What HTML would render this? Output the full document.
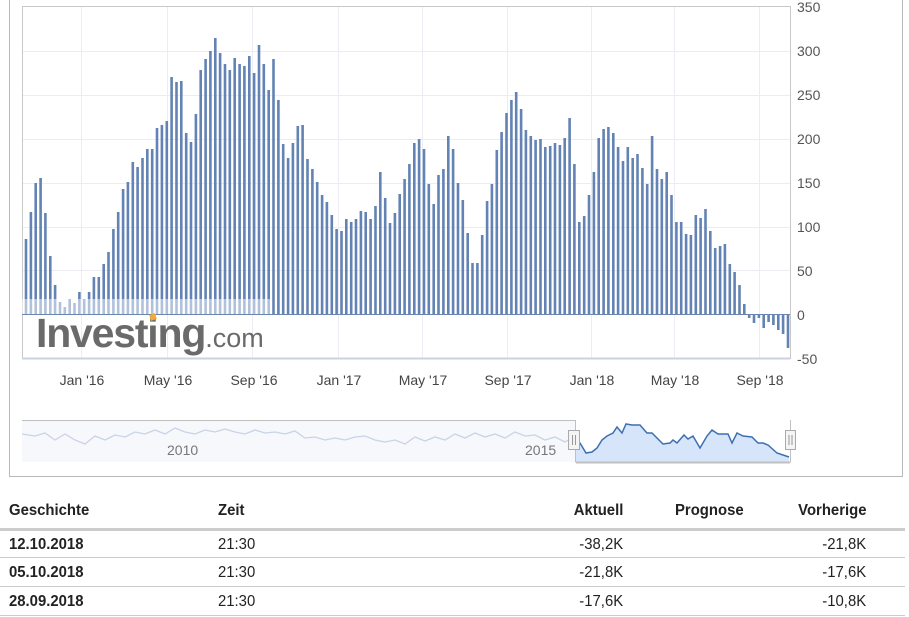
<!DOCTYPE html>
<html><head><meta charset="utf-8"><style>
body{margin:0;width:909px;height:617px;background:#fff;overflow:hidden;font-family:"Liberation Sans",Arial,sans-serif;position:relative}
svg{position:absolute;left:0;top:0}
.tbl{position:absolute;left:0;top:0;width:909px;font-size:16px;color:#222}
.t{position:absolute;white-space:nowrap;transform:scaleX(0.93);transform-origin:left}
.r{transform-origin:right}
.b{font-weight:bold}
.ln{position:absolute;left:0;width:905px;height:2px;background:#ccc}
</style></head><body>
<svg width="909" height="617" viewBox="0 0 909 617">
<path d="M9.5 0V476.5H902.5V0" fill="none" stroke="#b8b8b8"/>
<g stroke="#ececf2" stroke-width="1">
<path d="M22 51.5H790M22 95.5H790M22 139.5H790M22 183.5H790M22 227.5H790M22 270.5H790"/>
<path d="M81.5 7V358M167.5 7V358M252.5 7V358M338.5 7V358M422.5 7V358M507.5 7V358M591.5 7V358M674.5 7V358M759.5 7V358"/>
</g>
<rect x="22.5" y="6.5" width="768" height="352" fill="none" stroke="#c8c8c8"/>
<path d="M22 358.5H790" stroke="#c9d3e2" stroke-width="2"/>
<path id="bars" d="" stroke="#6383b4" stroke-width="2.6" fill="none"/>
<path d="M22 314.5H790" stroke="#6a86b0" stroke-width="1"/>
<rect x="22" y="299" width="250" height="15" fill="#fff" opacity="0.5"/>
<text x="36" y="347" font-size="41" font-weight="bold" fill="#6a6a6a" letter-spacing="-1.2" font-family="Liberation Sans,sans-serif">Investing<tspan font-weight="normal" font-size="27" letter-spacing="0">.com</tspan></text>
<rect x="150" y="314" width="6" height="6" fill="#f2a93b" transform="rotate(-20 153 317)"/>
<g font-size="14" fill="#555" font-family="Liberation Sans,sans-serif">
<text x="797" y="12">350</text><text x="797" y="56">300</text><text x="797" y="100">250</text><text x="797" y="144">200</text><text x="797" y="188">150</text><text x="797" y="232">100</text><text x="797" y="276">50</text><text x="797" y="320">0</text><text x="797" y="364">-50</text>
</g>
<g font-size="14" fill="#444" text-anchor="middle" font-family="Liberation Sans,sans-serif">
<text x="82" y="385">Jan '16</text><text x="168" y="385">May '16</text><text x="254" y="385">Sep '16</text><text x="339" y="385">Jan '17</text><text x="423" y="385">May '17</text><text x="508" y="385">Sep '17</text><text x="592" y="385">Jan '18</text><text x="675" y="385">May '18</text><text x="760" y="385">Sep '18</text>
</g>
<rect x="22" y="421" width="553" height="41" fill="#f6f8fc"/>
<path d="M22 420.5H575" stroke="#c0c0c0"/>
<path d="M22 434 L35 436 L45 433 L55 440 L65 434 L75 440 L85 444 L95 436 L105 440 L115 435 L125 437 L135 432 L145 434 L155 430 L165 434 L175 428 L185 432 L195 434 L205 430 L215 432 L225 429 L235 432 L245 434 L255 430 L265 433 L275 432 L285 434 L295 431 L305 438 L315 437 L325 440 L335 438 L345 440 L355 437 L365 436 L375 440 L385 442 L395 440 L405 444 L415 437 L425 441 L435 437 L445 440 L455 434 L465 438 L475 433 L485 437 L495 434 L505 438 L515 432 L525 436 L535 435 L545 440 L555 437 L565 442 L575 436" fill="none" stroke="#c8d4e6" stroke-width="1.3"/>
<g font-size="14" fill="#777" font-family="Liberation Sans,sans-serif"><text x="167" y="455">2010</text><text x="525" y="455">2015</text></g>
<path d="M576 442 L580 443 L586 453 L592 452 L597 448 L602 440 L607 436 L613 433 L617 427 L622 433 L626 424 L632 425 L640 425 L647 433 L652 433 L657 438 L663 444 L670 443 L673 440 L677 443 L684 435 L688 439 L693 436 L700 448 L707 436 L712 430 L718 434 L728 434 L732 443 L737 433 L743 436 L752 437 L758 443 L763 443 L768 445 L777 453 L783 455 L789 457 V462 H576Z" fill="#d6e5fa"/>
<path d="M576 442 L580 443 L586 453 L592 452 L597 448 L602 440 L607 436 L613 433 L617 427 L622 433 L626 424 L632 425 L640 425 L647 433 L652 433 L657 438 L663 444 L670 443 L673 440 L677 443 L684 435 L688 439 L693 436 L700 448 L707 436 L712 430 L718 434 L728 434 L732 443 L737 433 L743 436 L752 437 L758 443 L763 443 L768 445 L777 453 L783 455 L789 457" fill="none" stroke="#3d6fb0" stroke-width="1.5"/>
<path d="M575.5 420V462H790.5V420" fill="none" stroke="#c0c0c0"/>
<path d="M576 462.5H790" stroke="#c0c0c0" stroke-width="2"/>
<rect x="568.5" y="430.5" width="11" height="19" fill="#f4f4f4" stroke="#aaa"/>
<path d="M572.5 435V445M575.5 435V445" stroke="#999"/>
<rect x="785.5" y="430.5" width="10" height="19" fill="#f4f4f4" stroke="#aaa"/>
<path d="M789 435V445M792 435V445" stroke="#999"/>
</svg>
<div class="tbl">
<div class="t b" style="left:9px;top:502px">Geschichte</div>
<div class="t b" style="left:218px;top:502px">Zeit</div>
<div class="t b r" style="right:286px;top:502px">Aktuell</div>
<div class="t b" style="left:675px;top:502px">Prognose</div>
<div class="t b r" style="right:43px;top:502px">Vorherige</div>
<div class="ln" style="top:528px;height:3px"></div>
<div class="t b" style="left:9px;top:536px">12.10.2018</div><div class="t" style="left:218px;top:536px">21:30</div><div class="t r" style="right:286px;top:536px">-38,2K</div><div class="t r" style="right:43px;top:536px">-21,8K</div>
<div class="ln" style="top:557px;height:1px"></div>
<div class="t b" style="left:9px;top:564px">05.10.2018</div><div class="t" style="left:218px;top:564px">21:30</div><div class="t r" style="right:286px;top:564px">-21,8K</div><div class="t r" style="right:43px;top:564px">-17,6K</div>
<div class="ln" style="top:586px;height:1px"></div>
<div class="t b" style="left:9px;top:593px">28.09.2018</div><div class="t" style="left:218px;top:593px">21:30</div><div class="t r" style="right:286px;top:593px">-17,6K</div><div class="t r" style="right:43px;top:593px">-10,8K</div>
<div class="ln" style="top:615px;height:1px"></div>
</div>
<script>
var v=[239,212,183,178,213,256,285,302,307,299,303,292,299,292,277,277,264,252,229,212,189,182,162,167,158,149,149,128,125,121,77,82,81,133,142,114,70,59,51,38,53,64,70,58,64,66,56,73,45,64,90,59,100,144,158,143,126,
125,159,169,182,195,202,215,229,231,219,222,219,211,212,219,206,172,198,223,213,194,179,164,143,139,149,184,204,175,169,136,149,183,200,233,263,263,235,201,184,150,132,113,100,92,109,130,136,140,
139,147,146,143,145,138,118,164,222,216,195,172,138,129,127,133,147,161,147,158,154,168,184,136,169,179,172,195,222,222,234,235,215,218,209,231,248,246,244,264,272,285,304,318,323,318,328,322,325,330,334,348];
var d="",n=v.length,s=(788-26)/(n-1);
for(var i=0;i<n;i++){var x=(26+i*s).toFixed(1);d+="M"+x+" 314V"+v[i];}
document.getElementById("bars").setAttribute("d",d);
</script>
</body></html>
